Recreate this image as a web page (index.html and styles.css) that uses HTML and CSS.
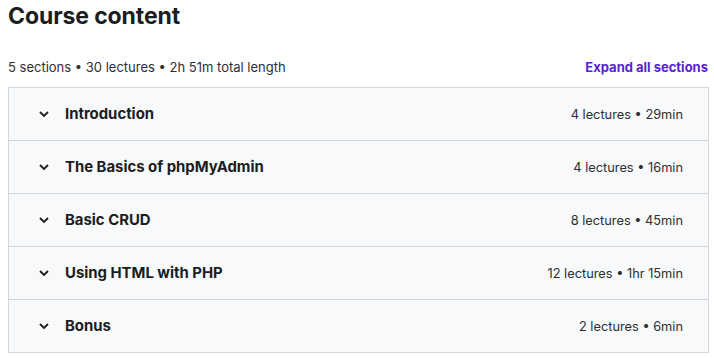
FILE: index.html
```html
<!DOCTYPE html>
<html lang="en">
<head>
    <meta charset="UTF-8">
    <title>Course content</title>
    <link rel="stylesheet" href="styles.css">
</head>
<body>
<div class="course-content">
    <h2>Course content</h2>

    <div class="content-meta">
        <span>5 sections • 30 lectures • 2h 51m total length</span>
        <button class="expand-all">Expand all sections</button>
    </div>

    <div class="section-list">
        <div class="section">
            <svg class="chevron" viewBox="0 0 12 8"><path d="M2 2 6 6l4-4"/></svg>
            <span class="section-title">Introduction</span>
            <span class="section-info">4 lectures • 29min</span>
        </div>
        <div class="section">
            <svg class="chevron" viewBox="0 0 12 8"><path d="M2 2 6 6l4-4"/></svg>
            <span class="section-title">The Basics of phpMyAdmin</span>
            <span class="section-info">4 lectures • 16min</span>
        </div>
        <div class="section">
            <svg class="chevron" viewBox="0 0 12 8"><path d="M2 2 6 6l4-4"/></svg>
            <span class="section-title">Basic CRUD</span>
            <span class="section-info">8 lectures • 45min</span>
        </div>
        <div class="section">
            <svg class="chevron" viewBox="0 0 12 8"><path d="M2 2 6 6l4-4"/></svg>
            <span class="section-title">Using HTML with PHP</span>
            <span class="section-info">12 lectures • 1hr 15min</span>
        </div>
        <div class="section">
            <svg class="chevron" viewBox="0 0 12 8"><path d="M2 2 6 6l4-4"/></svg>
            <span class="section-title">Bonus</span>
            <span class="section-info">2 lectures • 6min</span>
        </div>
    </div>
</div>
</body>
</html>
```

FILE: styles.css
```css
body { margin: 0; background: #fff; color: #1c1d1f; font-family: Inter, "Noto Sans", sans-serif; }
.course-content { width: 701px; padding: 0 0 0 8px; }
h2 { margin: 0; padding-top: 2px; font-size: 23px; font-weight: 700; line-height: 28px; letter-spacing: -0.1px; }
.content-meta { display: flex; justify-content: space-between; align-items: center; margin: 27px 0 10px; height: 20px; font-size: 13px; color: #2d2f31; }
.expand-all { border: none; background: none; padding: 0 1px 0 0; font: inherit; font-weight: 700; color: #5624d0; cursor: pointer; }
.section-list { border: 1px solid #d1d7dc; border-bottom: none; }
.section { display: flex; align-items: center; height: 52px; padding: 0 25px 0 29px; background: #f7f9fa; border-bottom: 1px solid #d1d7dc; }
.chevron { width: 12px; height: 8px; fill: none; stroke: #1c1d1f; stroke-width: 1.8; margin-right: 15px; }
.section-title { flex: 1; font-size: 14.9px; font-weight: 700; }
.section-info { font-size: 12.8px; color: #2d2f31; }
```
